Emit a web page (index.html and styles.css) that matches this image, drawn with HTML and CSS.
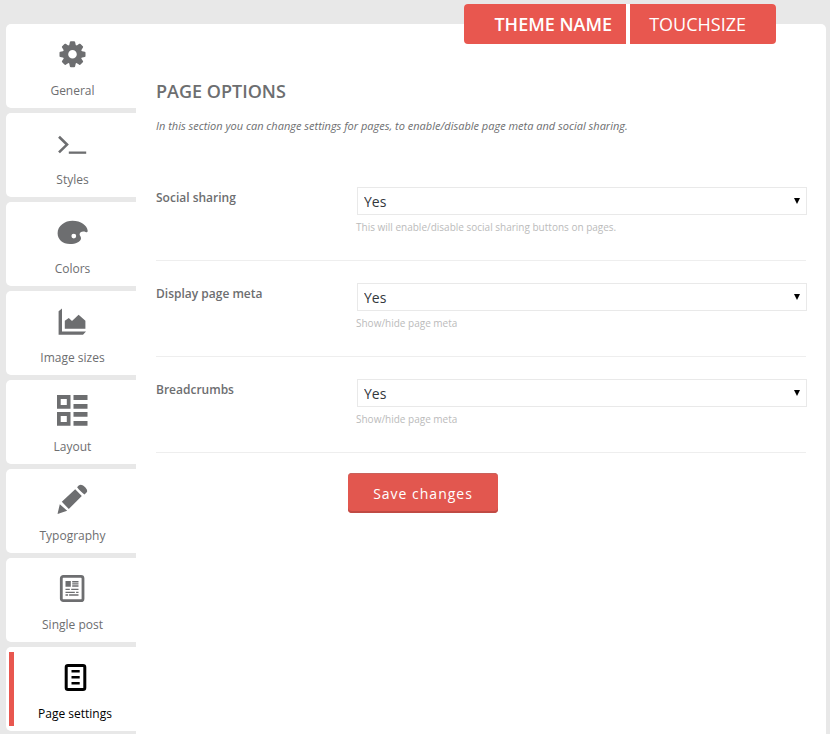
FILE: index.html
```html
<!DOCTYPE html>
<html lang="en">
<head>
<meta charset="utf-8">
<meta name="viewport" content="width=device-width, initial-scale=1">
<title>Page options</title>
<link rel="stylesheet" href="styles.css">
</head>
<body>
<div class="panel">
  <header class="brand">
    <a class="brand-link brand-theme" href="#">THEME NAME</a>
    <a class="brand-link brand-vendor" href="#">TOUCHSIZE</a>
  </header>

  <nav class="tabs" aria-label="Settings sections">
    <div class="tab"><a class="tab-link" href="#">
      <svg class="icon" viewBox="0 0 33 32" aria-hidden="true"><g transform="translate(16.5 16.3)"><circle r="7" fill="none" stroke="currentColor" stroke-width="5.4"/><g id="tooth"><path d="M-3.4-8.5-2.6-12.2Q-2.4-13-1.6-13H1.6Q2.4-13 2.6-12.2L3.4-8.5zM-3.4 8.5-2.6 12.2Q-2.4 13-1.6 13H1.6Q2.4 13 2.6 12.2L3.4 8.5z"/></g><use href="#tooth" transform="rotate(45)"/><use href="#tooth" transform="rotate(90)"/><use href="#tooth" transform="rotate(135)"/></g></svg>
      <span>General</span></a></div>
    <div class="tab"><a class="tab-link" href="#">
      <svg class="icon" viewBox="0 0 33 32" aria-hidden="true"><path d="M3 9.8 11 17.6 3 25.4" fill="none" stroke="currentColor" stroke-width="2.6"/><path d="M12.8 24.5h17.4v2.3H12.8z"/></svg>
      <span>Styles</span></a></div>
    <div class="tab"><a class="tab-link" href="#">
      <svg class="icon" viewBox="0 0 33 32" aria-hidden="true"><path fill-rule="evenodd" d="M16.5 4.7C25 4.7 31 9.5 31.6 14.2 31.9 16.4 31 16.4 29.5 15.9 26.5 15 23.5 16 23.6 18.6 23.7 20 25.2 20.5 25 22.5 24.7 26 19.5 28 14 28 6.5 28 1.6 23.5 1.6 17.3 1.6 9.5 9 4.7 16.5 4.7zM17.8 17.7A2.4 2.4 0 1 0 17.8 22.5 2.4 2.4 0 0 0 17.8 17.7z"/></svg>
      <span>Colors</span></a></div>
    <div class="tab"><a class="tab-link" href="#">
      <svg class="icon" viewBox="0 0 33 32" aria-hidden="true"><path d="M2.6 6.2 6 3.5V26.6H30L27 29.8H2.6zM8.8 23.7v-8L12.8 13l3.2 3 6.6-6.3 6.8 6v8z"/></svg>
      <span>Image sizes</span></a></div>
    <div class="tab"><a class="tab-link" href="#">
      <svg class="icon" viewBox="0 0 33 32" aria-hidden="true"><path fill-rule="evenodd" d="M1 1h13.5v13.7H1zM4.7 5v6h6.1V5zM1 18h13.5v13.7H1zM4.7 22v6h6.1v-6zM17.5 1h14v5h-14zM17.5 10h14v4.7h-14zM17.5 18h14v4.7h-14zM17.5 27h14v4.7h-14z"/></svg>
      <span>Layout</span></a></div>
    <div class="tab"><a class="tab-link" href="#">
      <svg class="icon" viewBox="0 0 33 32" aria-hidden="true"><path d="M1.5 31 3.8 21.3 11.2 27.7zM5.8 18.7 19.2 6.3 25.8 13 12.8 26zM21.1 4.2 22.7 2.6C24.5 1 26.5 1.8 28.3 3.6 30.5 5.7 32.2 7.6 30.5 9.6L28.5 11.4C25.9 9.6 23.5 7.4 21.1 4.2z"/></svg>
      <span>Typography</span></a></div>
    <div class="tab"><a class="tab-link" href="#">
      <svg class="icon" viewBox="0 0 33 32" aria-hidden="true"><rect x="5.3" y="4.4" width="21.7" height="24.3" rx="2" fill="none" stroke="currentColor" stroke-width="2.8"/><path d="M9.5 9h5.3v5.7H9.5zM16.2 9h6.3v1.5h-6.3zM16.2 11.2h6.3v1.4h-6.3zM16.2 13.3h6.3v1.4h-6.3zM9.5 16.7h4.3v1.3H9.5zM15.2 16.7h7.3v1.3h-7.3zM9.5 19.7h9.3v1.2H9.5zM20.1 19.7h2.4v1.2h-2.4zM9.5 22.3h2.6v1.4H9.5zM13.1 22.3h9.4v1.4h-9.4z"/></svg>
      <span>Single post</span></a></div>
    <div class="tab"><a class="tab-link tab-active" href="#" aria-current="page">
      <svg class="icon" viewBox="0 0 33 32" aria-hidden="true"><rect x="7.2" y="4.5" width="18.6" height="24" rx="1.8" fill="none" stroke="currentColor" stroke-width="3"/><path d="M12.5 9h8.2v2.4h-8.2zM12.5 15h8.2v2.4h-8.2zM12.5 21h8.2v2.4h-8.2z"/></svg>
      <span>Page settings</span></a></div>
  </nav>

  <main class="content">
    <h1 class="title">PAGE OPTIONS</h1>
    <p class="intro">In this section you can change settings for pages, to enable/disable page meta and social sharing.</p>
    <form>
      <div class="row">
        <label class="row-label" for="sharing">Social sharing</label>
        <div>
          <div class="select-box"><select class="select" id="sharing"><option>Yes</option><option>No</option></select></div>
          <p class="hint">This will enable/disable social sharing buttons on pages.</p>
        </div>
      </div>
      <div class="row">
        <label class="row-label" for="meta">Display page meta</label>
        <div>
          <div class="select-box"><select class="select" id="meta"><option>Yes</option><option>No</option></select></div>
          <p class="hint">Show/hide page meta</p>
        </div>
      </div>
      <div class="row">
        <label class="row-label" for="breadcrumbs">Breadcrumbs</label>
        <div>
          <div class="select-box"><select class="select" id="breadcrumbs"><option>Yes</option><option>No</option></select></div>
          <p class="hint">Show/hide page meta</p>
        </div>
      </div>
      <button class="save" type="submit">Save changes</button>
    </form>
  </main>
</div>
</body>
</html>
```
FILE: styles.css
```css
* {
  box-sizing: border-box;
}

body {
  margin: 0;
  background: #e8e8e8;
  color: #6d6e70;
  font-family: "Open Sans", sans-serif;
  font-size: 12px;
}

a {
  color: inherit;
  text-decoration: none;
}

.panel {
  position: relative;
  display: flex;
  min-height: 100vh;
  padding: 24px 4px 0 6px;
}

.brand {
  position: absolute;
  top: 4px;
  right: 54px;
  display: flex;
  gap: 4px;
  background: #fff;
  border-radius: 4px;
}

.brand-link {
  background: #e8574f;
  color: #fff;
  font-size: 18px;
  line-height: 40px;
}

.brand-theme {
  padding: 0 14px 0 30px;
  border-radius: 4px 0 0 4px;
  font-weight: 600;
}

.brand-vendor {
  padding: 0 30px 0 19px;
  border-radius: 0 4px 4px 0;
}

.tabs {
  flex: 0 0 130px;
  display: flex;
  flex-direction: column;
  gap: 5px;
}

.tab {
  padding: 5px 0 5px 3px;
  background: #fff;
  border-radius: 5px 0 0 5px;
}

.tab-link {
  display: flex;
  flex-direction: column;
  align-items: center;
  gap: 13px;
  height: 74px;
  padding-top: 9px;
  line-height: 16px;
}

.tab-active {
  border-left: 5px solid #e8574f;
  color: #000;
}

.icon {
  width: 33px;
  height: 32px;
  fill: currentColor;
}

.content {
  flex: 1;
  padding: 55px 20px 20px;
  background: #fff;
  border-radius: 0 5px 0 0;
}

.title {
  margin: 0;
  font-size: 18px;
  font-weight: 600;
  line-height: 24px;
}

.intro {
  margin: 15px 0 30px;
  font-size: 11px;
  font-style: italic;
  line-height: 16px;
}

.row {
  display: grid;
  grid-template-columns: 200px 1fr;
  height: 97px;
  margin-bottom: -1px;
  padding-top: 23px;
  border-bottom: 1px solid #eee;
}

.row-label {
  padding-top: 3px;
  font-weight: 600;
  line-height: 16px;
}

.select-box {
  position: relative;
  margin: 0 -1px 0 1px;
}

.select-box::after {
  content: "";
  position: absolute;
  top: 11px;
  right: 7px;
  border: solid transparent;
  border-width: 6px 3px 0;
  border-top-color: #000;
  pointer-events: none;
}

.select {
  display: block;
  width: 100%;
  height: 28px;
  padding: 0 20px 0 6px;
  appearance: none;
  background: #fff;
  border: 1px solid #e9e9e9;
  border-radius: 0;
  color: #32373c;
  font: 14px "Open Sans", sans-serif;
}

.hint {
  margin: 4px 0 0;
  color: #bbb;
  font-size: 10px;
  line-height: 16px;
}

.save {
  display: block;
  width: 150px;
  height: 40px;
  margin: 21px 0 0 192px;
  padding: 0;
  background: #e2574f;
  border: 0;
  border-radius: 4px;
  box-shadow: inset 0 -2px #c04a44, inset 0 1px #c9625c;
  color: #fff;
  font: 14px "Open Sans", sans-serif;
  letter-spacing: 1px;
}
```
